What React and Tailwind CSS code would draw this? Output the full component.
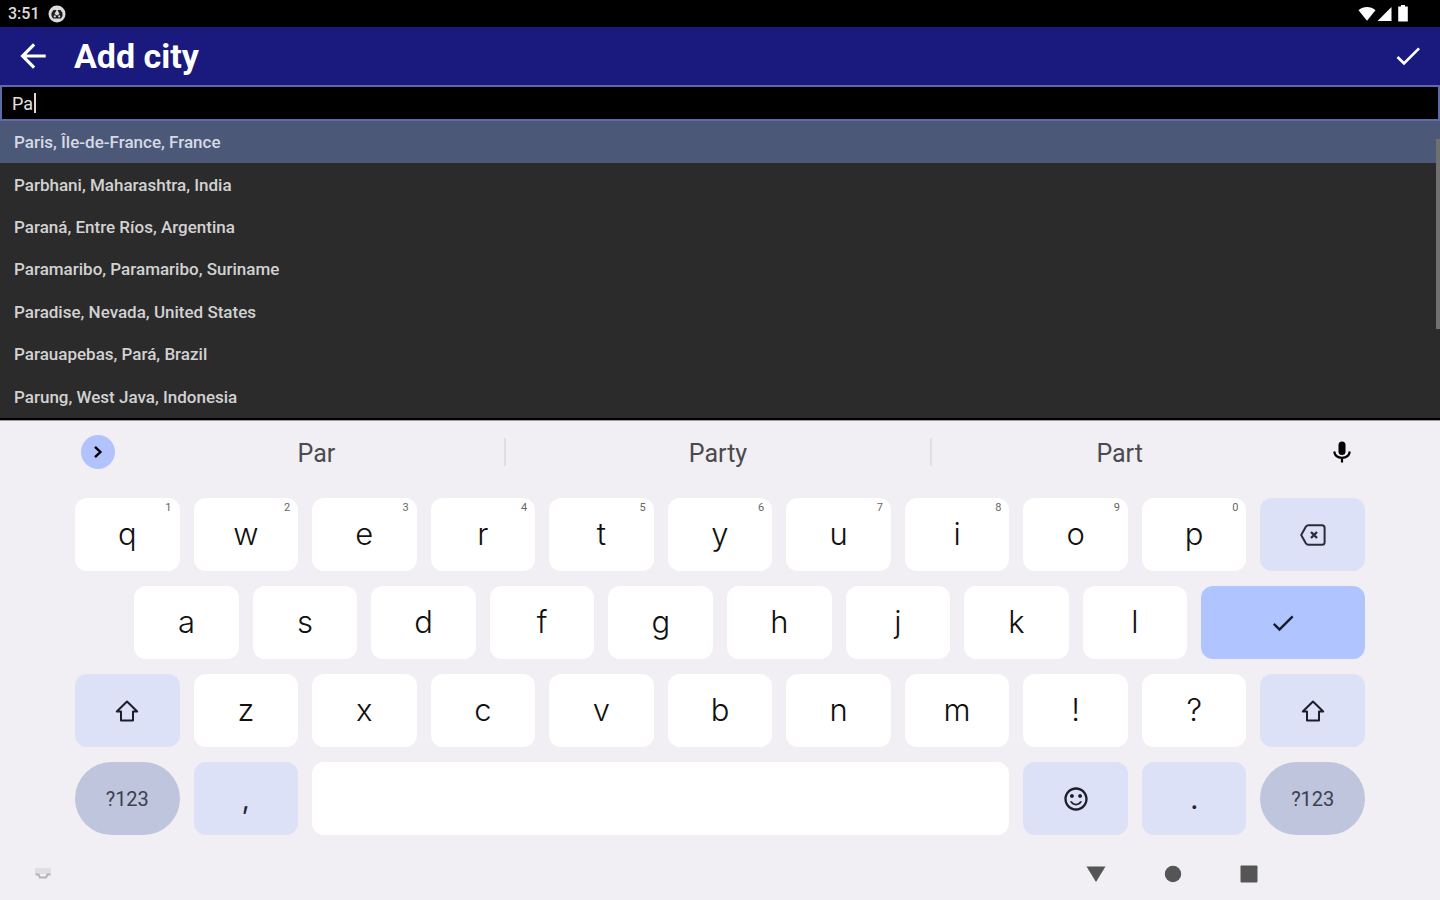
import React, { useState } from "react";
import { MdArrowBack, MdCheck, MdSentimentSatisfiedAlt } from "react-icons/md";

const cities = [
    "Paris, Île-de-France, France",
    "Parbhani, Maharashtra, India",
    "Paraná, Entre Ríos, Argentina",
    "Paramaribo, Paramaribo, Suriname",
    "Paradise, Nevada, United States",
    "Parauapebas, Pará, Brazil",
    "Parung, West Java, Indonesia",
];

const topRow = ["q", "w", "e", "r", "t", "y", "u", "i", "o", "p"];
const homeRow = ["a", "s", "d", "f", "g", "h", "j", "k", "l"];
const bottomRow = ["z", "x", "c", "v", "b", "n", "m", "!", "?"];

const StatusBar = () => (
    <div className="flex h-[27px] items-center justify-between bg-black pl-2 pr-[30px] text-[#dcdcdc]">
        <div className="flex items-center gap-2">
            <span className="text-base font-medium leading-none">3:51</span>
            <svg width="18" height="18" viewBox="0 0 18 18">
                <circle cx="9" cy="9" r="8.5" fill="#dcdcdc" />
                <path d="M3.5 8 5.5 5h7l2 3v3l-1.5 2.5H5L3.5 11z" fill="#1c1c1c" />
                <path d="M9 4 6.5 9 9 10.5 11.5 9z" fill="#dcdcdc" />
                <circle cx="6.8" cy="11.4" r="1.1" fill="#dcdcdc" />
                <circle cx="11.2" cy="11.4" r="1.1" fill="#dcdcdc" />
            </svg>
        </div>
        <div className="flex items-center text-white">
            <svg width="52" height="18" viewBox="0 0 52 18" fill="currentColor">
                <path d="M0.5 5.2C5.5 0.9 12.5 0.9 17.5 5.2L9 15.8z" />
                <path d="M33.5 2v14H19.5z" />
                <path d="M43 0h4v1.5h2.8v15h-9.6v-15H43z" />
            </svg>
        </div>
    </div>
);

const Header = () => (
    <header className="flex h-[58px] items-center justify-between bg-[#1a197d] pl-3.5 pr-4 text-white">
        <div className="flex items-center gap-[22px]">
            <button aria-label="Back">
                <MdArrowBack className="size-[38px]" />
            </button>
            <h1 className="text-[34px] font-bold leading-none">Add city</h1>
        </div>
        <button aria-label="Save">
            <MdCheck className="size-8" />
        </button>
    </header>
);

const Key = ({ label, hint }) => (
    <button className="relative col-span-2 flex items-center justify-center rounded-xl bg-white font-[Inter,sans-serif] text-[31px] font-light text-[#111]">
        {label}
        {hint && (
            <span className="absolute right-2 top-1 font-[Roboto,sans-serif] text-[11px] font-normal leading-3 text-[#666]">
                {hint}
            </span>
        )}
    </button>
);

const ShiftKey = ({ label }) => (
    <button aria-label={label} className="col-span-2 flex items-center justify-center rounded-xl bg-[#dce1f8] text-[#1c1e28]">
        <svg width="24" height="24" viewBox="0 0 24 24" fill="none" stroke="currentColor" strokeWidth="2" strokeLinejoin="round">
            <path d="M12 2.5 1.8 12.5H6V21.5h12v-9h4.2z" />
        </svg>
    </button>
);

const SymbolsKey = () => (
    <button className="col-span-2 flex items-center justify-center rounded-full bg-[#bfc5dc] text-xl text-[#3c4050]">
        ?123
    </button>
);

const Suggestions = () => (
    <div className="flex h-[61px] items-center">
        <div className="w-[54px] pl-1.5">
            <button aria-label="More" className="flex size-[34px] items-center justify-center rounded-full bg-[#b1c2fc] text-black">
                <svg width="12" height="14" viewBox="0 0 12 14" fill="none" stroke="currentColor" strokeWidth="2.4">
                    <path d="m3 1.8 5.4 5.2L3 12.2" />
                </svg>
            </button>
        </div>
        <button className="h-7 flex-[376] text-[25px] leading-8">Par</button>
        <button className="h-7 flex-[426] border-x-2 border-[#dfdee2] text-[25px] leading-8">Party</button>
        <button className="h-7 flex-[376] text-[25px] leading-8">Part</button>
        <div className="flex w-[58px] justify-center pl-3">
            <button aria-label="Voice input" className="text-black">
                <svg width="20" height="22" viewBox="0 0 20 22" fill="none">
                    <rect x="6.5" y="0.5" width="7" height="13.5" rx="3.5" fill="currentColor" />
                    <path d="M2.2 10.5c.6 4 3.6 6.3 7.8 6.3s7.2-2.3 7.8-6.3M10 17v4.5" stroke="currentColor" strokeWidth="2.2" />
                </svg>
            </button>
        </div>
    </div>
);

const Keyboard = () => (
    <div className="flex flex-1 flex-col border-t border-[#9a9a9a] bg-[#f1eff3] text-[#4a4a4f]">
        <div className="px-[75px]">
            <Suggestions />
            <div className="mt-4 grid auto-rows-[73px] grid-cols-22 gap-x-3.5 gap-y-[15px]">
                {topRow.map((k, i) => (
                    <Key key={k} label={k} hint={String((i + 1) % 10)} />
                ))}
                <button aria-label="Backspace" className="col-span-2 flex items-center justify-center rounded-xl bg-[#dde1f7] text-[#2a2c3a]">
                    <svg width="26" height="22" viewBox="0 0 26 22" fill="none" stroke="currentColor" strokeWidth="2" strokeLinejoin="round">
                        <path d="M8.5 1.2H22a2.6 2.6 0 0 1 2.6 2.6v14.4a2.6 2.6 0 0 1-2.6 2.6H8.5Q6.8 20.8 5.8 19.2L1.2 11 5.8 2.8Q6.8 1.2 8.5 1.2z" />
                        <path d="m11 8 6 6m0-6-6 6" strokeWidth="2.4" />
                    </svg>
                </button>

                <div className="col-span-1" />
                {homeRow.map((k) => (
                    <Key key={k} label={k} />
                ))}
                <button aria-label="Done" className="col-span-3 flex items-center justify-center rounded-xl bg-[#b0c4ff] text-[#181c2a]">
                    <MdCheck className="size-7" />
                </button>

                <ShiftKey label="Left shift" />
                {bottomRow.map((k) => (
                    <Key key={k} label={k} />
                ))}
                <ShiftKey label="Right shift" />

                <SymbolsKey />
                <button className="col-span-2 rounded-xl bg-[#dce1f8] font-[Inter,sans-serif] text-[28px] text-[#22242e]">,</button>
                <button aria-label="Space" className="col-span-12 rounded-xl bg-white" />
                <button aria-label="Emoji" className="col-span-2 flex items-center justify-center rounded-xl bg-[#dce1f8] text-[#1c1e28]">
                    <MdSentimentSatisfiedAlt className="size-7" />
                </button>
                <button className="col-span-2 rounded-xl bg-[#dce1f8] font-[Inter,sans-serif] text-[28px] text-[#22242e]">.</button>
                <SymbolsKey />
            </div>
        </div>
        <nav className="flex flex-1 items-center justify-between pl-[34px] pr-[182px] pt-3">
            <button aria-label="Hide keyboard">
                <svg width="18" height="14" viewBox="0 0 18 14" fill="none">
                    <path d="M1 1h16v6H1z" fill="#dfdee2" />
                    <path d="M1.5 7.5h3l1.5 3h6l1.5-3h3" stroke="#b4b3b8" strokeWidth="2" />
                </svg>
            </button>
            <div className="flex items-center gap-[58px] text-[#555]">
                <button aria-label="Back navigation">
                    <svg width="20" height="18" viewBox="0 0 20 18" fill="currentColor">
                        <path d="M0.5 1.5h19L10 17z" />
                    </svg>
                </button>
                <button aria-label="Home">
                    <svg width="18" height="18" viewBox="0 0 18 18" fill="currentColor">
                        <circle cx="9" cy="9" r="8.2" />
                    </svg>
                </button>
                <button aria-label="Recent apps">
                    <svg width="18" height="18" viewBox="0 0 18 18" fill="currentColor">
                        <rect x="0.5" y="0.5" width="17" height="17" rx="1" />
                    </svg>
                </button>
            </div>
        </nav>
    </div>
);

const App = () => {
    const [query, setQuery] = useState("Pa");
    const [selected, setSelected] = useState(0);

    return (
        <div className="flex min-h-screen flex-col bg-black font-[Roboto,sans-serif]">
            <StatusBar />
            <Header />
            <div className="relative h-9 border-2 border-[#5d6aa5]">
                <input
                    aria-label="City"
                    value={query}
                    onChange={(e) => setQuery(e.target.value)}
                    className="block h-full w-full bg-black px-2.5 text-lg text-[#e0e0e0] outline-none"
                />
                <span className="absolute left-8 top-1.5 h-5 w-0.5 bg-[#d8d8d8]" />
            </div>
            <div className="relative border-b-2 border-black bg-[#2b2b2b]">
                <ul className="grid h-[297px] grid-rows-7">
                    {cities.map((city, i) => (
                        <li key={city} className="grid">
                            <button
                                onClick={() => setSelected(i)}
                                className={`px-3.5 text-left text-[17px] leading-5 font-medium ${
                                    i === selected ? "bg-[#4c5878] text-[#d6dae4]" : "text-[#d2d2d2]"
                                }`}
                            >
                                {city}
                            </button>
                        </li>
                    ))}
                </ul>
                <span className="absolute right-0 top-[18px] h-[190px] w-1 bg-[#707070]" />
            </div>
            <Keyboard />
        </div>
    );
};

export default App;
